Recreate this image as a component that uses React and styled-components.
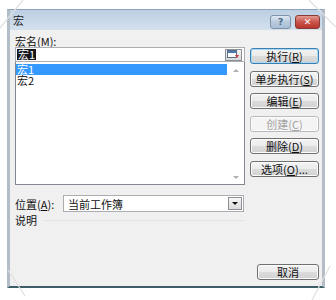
import React from "react";
import styled, { createGlobalStyle } from "styled-components";

const Global = createGlobalStyle`
  html, body { margin: 0; padding: 0; background: #ffffff; }
  body { font-family: "Noto Sans CJK SC", "Noto Sans", sans-serif; }
  * { box-sizing: border-box; }
`;

const FONT = `"Noto Sans CJK SC", "Noto Sans", sans-serif`;

const Page = styled.div`
  position: relative;
  width: 336px;
  height: 300px;
  padding: 9px 11px 12px 7px;
  background: #ffffff;
  overflow: hidden;
`;

const Window = styled.div`
  height: 279px;
  display: flex;
  flex-direction: column;
  border-left: 3px solid #b3bdc7;
  border-right: 3px solid #b3bdc7;
  border-top: 1px solid #8ea3b8;
  border-bottom: 2px solid #3d5e68;
  background: #f0f0f0;
  font-family: ${FONT};
  font-size: 11px;
  color: #111;
`;

const TitleBar = styled.div`
  height: 20px;
  display: flex;
  align-items: center;
  justify-content: space-between;
  padding: 0 2px 0 3px;
  background: linear-gradient(to bottom, #bccfe3, #d3e0ed);
`;

const Title = styled.span`
  font-size: 11px;
  line-height: 12px;
  color: #1a1a1a;
`;

const TitleButtons = styled.div`
  display: flex;
  gap: 4px;
  align-items: center;
  margin-top: 4px;
`;

const CapButton = styled.div`
  width: ${(p) => p.$w}px;
  height: 14px;
  border: 1px solid ${(p) => (p.$close ? "#8a3a34" : "#7f93a8")};
  border-radius: 3px;
  display: flex;
  align-items: center;
  justify-content: center;
  font-family: "DejaVu Sans", sans-serif;
  font-size: 9px;
  font-weight: bold;
  color: ${(p) => (p.$close ? "#ffffff" : "#4a6a8a")};
  background: ${(p) =>
    p.$close
      ? "linear-gradient(to bottom, #e19a91, #c9544a 50%, #b9362c)"
      : "linear-gradient(to bottom, #dfe8f1, #b9cbde 50%, #a9bfd6)"};
`;

const Body = styled.div`
  flex: 1;
  display: flex;
  flex-direction: column;
  padding: 5px 3px 6px 5px;
`;

const Top = styled.div`
  display: grid;
  grid-template-columns: 230px 69px;
  column-gap: 5px;
  align-items: start;
`;

const Left = styled.div`
  display: flex;
  flex-direction: column;
`;

const Label = styled.div`
  line-height: 12px;
  height: 12px;
  white-space: nowrap;
`;

const Key = styled.span`
  text-decoration: underline;
`;

const InputBox = styled.div`
  height: 15px;
  border: 1px solid #abadb3;
  background: #fff;
  display: flex;
  align-items: center;
  justify-content: space-between;
  padding: 0 2px 0 1px;
`;

const SelText = styled.span`
  background: #16161e;
  color: #fff;
  line-height: 11px;
  font-size: 11px;
  padding: 0 1px;
`;

const MiniBtn = styled.div`
  width: 17px;
  height: 12px;
  border: 1px solid #8a8f96;
  background: linear-gradient(#f4f4f4, #d8d8d8);
  display: flex;
  align-items: center;
  justify-content: center;
`;

const ListBox = styled.div`
  height: 123px;
  border: 1px solid #828790;
  border-top: none;
  background: #fff;
  display: flex;
`;

const Items = styled.div`
  flex: 1;
  padding-top: 2px;
  display: flex;
  flex-direction: column;
`;

const Item = styled.div`
  height: 11px;
  line-height: 11px;
  padding-left: 1px;
  background: ${(p) => (p.$sel ? "#3399ff" : "transparent")};
  color: ${(p) => (p.$sel ? "#ffffff" : "#111")};
`;

const ScrollBar = styled.div`
  width: 17px;
  display: flex;
  flex-direction: column;
  justify-content: space-between;
  align-items: center;
  padding: 7px 0 5px;
`;

const Arrow = styled.div`
  width: 0;
  height: 0;
  border-left: 3px solid transparent;
  border-right: 3px solid transparent;
  ${(p) =>
    p.$up
      ? "border-bottom: 3px solid #b0b0b0;"
      : "border-top: 3px solid #b0b0b0;"}
`;

const Row = styled.div`
  display: flex;
  align-items: center;
  margin-top: ${(p) => p.$mt || 0}px;
`;

const RowLabel = styled.div`
  width: 48px;
  line-height: 12px;
  white-space: nowrap;
`;

const Select = styled.div`
  width: 181px;
  height: 17px;
  border: 1px solid #abadb3;
  background: #fff;
  display: flex;
  align-items: center;
  justify-content: space-between;
  padding: 0 1px 0 4px;
`;

const SelectBtn = styled.div`
  width: 14px;
  height: 13px;
  border: 1px solid #8d9096;
  background: linear-gradient(#f6f6f6, #dadada);
  display: flex;
  align-items: center;
  justify-content: center;
`;

const DownTri = styled.div`
  width: 0;
  height: 0;
  border-left: 3px solid transparent;
  border-right: 3px solid transparent;
  border-top: 3px solid #111;
`;

const Desc = styled.div`
  display: flex;
  align-items: center;
  gap: 6px;
  margin-top: 2px;
  line-height: 12px;
  &::after {
    content: "";
    flex: 1;
    height: 1px;
    background: #e2e2e2;
  }
`;

const Side = styled.div`
  margin-top: 13px;
  display: flex;
  flex-direction: column;
  gap: 6.5px;
`;

const Button = styled.div`
  height: 16px;
  width: ${(p) => p.$w || 69}px;
  border: 1px solid ${(p) => (p.$def ? "#3c7fb1" : p.$dis ? "#b8bcc0" : "#707070")};
  border-radius: 3px;
  background: ${(p) =>
    p.$dis ? "#f4f4f4" : "linear-gradient(to bottom, #f3f3f3, #ebebeb 50%, #dcdcdc 51%, #d2d2d2)"};
  box-shadow: ${(p) => (p.$def ? "inset 0 0 0 1px #a7d8f4" : "inset 0 0 0 1px #fcfcfc")};
  display: flex;
  align-items: center;
  justify-content: center;
  line-height: 12px;
  color: ${(p) => (p.$dis ? "#a4a4a4" : "#111")};
  white-space: nowrap;
`;

const Footer = styled.div`
  margin-top: auto;
  display: flex;
  justify-content: flex-end;
`;

const Decor = styled.svg`
  position: absolute;
  left: 0;
  top: 0;
  pointer-events: none;
`;

export default function App() {
  return (
    <>
      <Global />
      <Page>
        <Window>
          <TitleBar>
            <Title>宏</Title>
            <TitleButtons>
              <CapButton $w={21}>?</CapButton>
              <CapButton $w={25} $close>✕</CapButton>
            </TitleButtons>
          </TitleBar>
          <Body>
            <Top>
              <Left>
                <Label>
                  宏名(<Key>M</Key>):
                </Label>
                <InputBox>
                  <SelText>宏1</SelText>
                  <MiniBtn>
                    <svg width="13" height="9" viewBox="0 0 13 9">
                      <rect x="0.5" y="0.5" width="9" height="7" fill="#fff" stroke="#5a6f86" />
                      <rect x="1" y="1" width="8" height="2" fill="#4b78b0" />
                      <path d="M8 5 L12 5 L10 8 Z" fill="#c83a3a" />
                    </svg>
                  </MiniBtn>
                </InputBox>
                <ListBox>
                  <Items>
                    <Item $sel>宏1</Item>
                    <Item>宏2</Item>
                  </Items>
                  <ScrollBar>
                    <Arrow $up />
                    <Arrow />
                  </ScrollBar>
                </ListBox>
                <Row $mt={10}>
                  <RowLabel>
                    位置(<Key>A</Key>):
                  </RowLabel>
                  <Select>
                    <span>当前工作簿</span>
                    <SelectBtn>
                      <DownTri />
                    </SelectBtn>
                  </Select>
                </Row>
                <Desc>说明</Desc>
              </Left>
              <Side>
                <Button $def>执行(<Key>R</Key>)</Button>
                <Button>单步执行(<Key>S</Key>)</Button>
                <Button>编辑(<Key>E</Key>)</Button>
                <Button $dis>创建(<Key>C</Key>)</Button>
                <Button>删除(<Key>D</Key>)</Button>
                <Button>选项(<Key>O</Key>)...</Button>
              </Side>
            </Top>
            <Footer>
              <Button $w={62}>取消</Button>
            </Footer>
          </Body>
        </Window>
        <Decor width="336" height="300" viewBox="0 0 336 300">
          <g stroke="#e0e0e0" strokeWidth="1.2" fill="none">
            <path d="M0 28 L23 0" />
            <path d="M309 0 L336 27" />
            <path d="M8 270 L25 296" />
            <path d="M330 266 L312 300" />
          </g>
        </Decor>
      </Page>
    </>
  );
}
